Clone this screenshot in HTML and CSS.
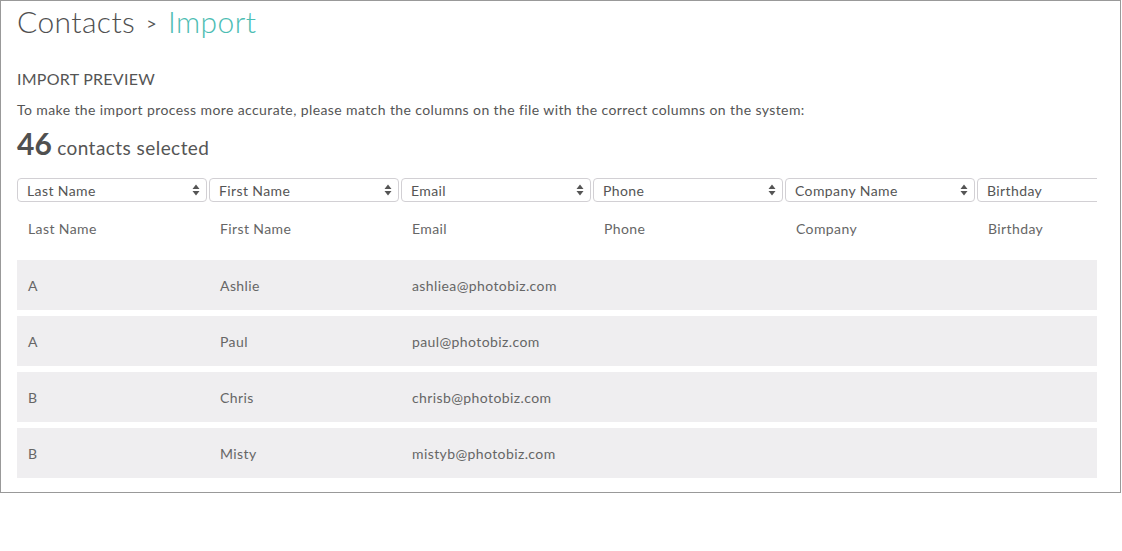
FILE: index.html
```html
<!DOCTYPE html>
<html>
<head>
<meta charset="utf-8">
<link rel="stylesheet" href="styles.css">
</head>
<body>
<div class="frame">
  <h1 class="crumbs"><span class="crumb">Contacts</span><span class="sep">&gt;</span><span class="current">Import</span></h1>
  <h2 class="section">IMPORT PREVIEW</h2>
  <p class="hint">To make the import process more accurate, please match the columns on the file with the correct columns on the system:</p>
  <div class="count"><span class="num">46</span> contacts selected</div>
  <div class="table">
    <div class="grid selects">
      <div class="select"><span>Last Name</span><svg class="arrows" width="8" height="12" viewBox="0 0 8 12"><path d="M4 0.5L7.5 5H0.5Z M4 11.5L0.5 7H7.5Z" fill="#555"/></svg></div>
      <div class="select"><span>First Name</span><svg class="arrows" width="8" height="12" viewBox="0 0 8 12"><path d="M4 0.5L7.5 5H0.5Z M4 11.5L0.5 7H7.5Z" fill="#555"/></svg></div>
      <div class="select"><span>Email</span><svg class="arrows" width="8" height="12" viewBox="0 0 8 12"><path d="M4 0.5L7.5 5H0.5Z M4 11.5L0.5 7H7.5Z" fill="#555"/></svg></div>
      <div class="select"><span>Phone</span><svg class="arrows" width="8" height="12" viewBox="0 0 8 12"><path d="M4 0.5L7.5 5H0.5Z M4 11.5L0.5 7H7.5Z" fill="#555"/></svg></div>
      <div class="select"><span>Company Name</span><svg class="arrows" width="8" height="12" viewBox="0 0 8 12"><path d="M4 0.5L7.5 5H0.5Z M4 11.5L0.5 7H7.5Z" fill="#555"/></svg></div>
      <div class="select"><span>Birthday</span><svg class="arrows" width="8" height="12" viewBox="0 0 8 12"><path d="M4 0.5L7.5 5H0.5Z M4 11.5L0.5 7H7.5Z" fill="#555"/></svg></div>
    </div>
    <div class="grid head">
      <div class="cell">Last Name</div>
      <div class="cell">First Name</div>
      <div class="cell">Email</div>
      <div class="cell">Phone</div>
      <div class="cell">Company</div>
      <div class="cell">Birthday</div>
    </div>
    <div class="rows">
      <div class="grid row"><div class="cell">A</div><div class="cell">Ashlie</div><div class="cell">ashliea@photobiz.com</div><div class="cell"></div><div class="cell"></div><div class="cell"></div></div>
      <div class="grid row"><div class="cell">A</div><div class="cell">Paul</div><div class="cell">paul@photobiz.com</div><div class="cell"></div><div class="cell"></div><div class="cell"></div></div>
      <div class="grid row"><div class="cell">B</div><div class="cell">Chris</div><div class="cell">chrisb@photobiz.com</div><div class="cell"></div><div class="cell"></div><div class="cell"></div></div>
      <div class="grid row"><div class="cell">B</div><div class="cell">Misty</div><div class="cell">mistyb@photobiz.com</div><div class="cell"></div><div class="cell"></div><div class="cell"></div></div>
    </div>
  </div>
</div>
</body>
</html>
```

FILE: styles.css
```css
* { box-sizing: border-box; }
html, body { margin: 0; padding: 0; background: #fff; }
body { font-family: Lato, "Open Sans", sans-serif; color: #555; }

.frame {
  width: 1121px;
  height: 493px;
  border: 1px solid #999;
  padding: 2px 23px 0 16px;
  overflow: hidden;
}

.crumbs {
  margin: 0;
  font-weight: 300;
  font-size: 30px;
  line-height: 36px;
  display: flex;
  align-items: baseline;
  letter-spacing: 0.4px;
}
.crumb { color: #505050; }
.sep { font-size: 18px; font-weight: 400; color: #555; margin: 0 11px 0 11px; position: relative; top: -3px; }
.current { color: #4dbdb3; }

.section {
  margin: 25px 0 0;
  font-size: 16px;
  font-weight: 400;
  line-height: 20px;
  color: #555;
  letter-spacing: 0.25px;
}

.hint {
  margin: 11px 0 0;
  font-size: 14px;
  line-height: 20px;
  color: #555;
  letter-spacing: 0.4px;
}

.count {
  margin-top: 8px;
  font-size: 19px;
  line-height: 30px;
  color: #555;
  letter-spacing: 0.45px;
}
.num { font-size: 30px; font-weight: 700; color: #505050; letter-spacing: 0; }

.table {
  margin-top: 15px;
  width: 1080px;
  overflow: hidden;
}

.grid {
  display: grid;
  grid-template-columns: repeat(6, 190px);
  column-gap: 2px;
}

.select {
  height: 24px;
  border: 1px solid #d2d0d4;
  border-radius: 4px;
  background: #fff;
  display: flex;
  align-items: center;
  justify-content: space-between;
  padding: 0 6px 0 9px;
  font-size: 14px;
  color: #555;
  letter-spacing: 0.4px;
}
.arrows { flex: none; }

.head {
  padding: 17px 0 21px;
  font-size: 14px;
  line-height: 20px;
  color: #666;
  letter-spacing: 0.4px;
}
.cell { padding-left: 11px; white-space: nowrap; }

.rows { display: flex; flex-direction: column; gap: 6px; }
.row {
  height: 50px;
  align-items: center;
  background: #efeef0;
  font-size: 14px;
  color: #666;
  letter-spacing: 0.4px;
  width: 1080px;
}
```
